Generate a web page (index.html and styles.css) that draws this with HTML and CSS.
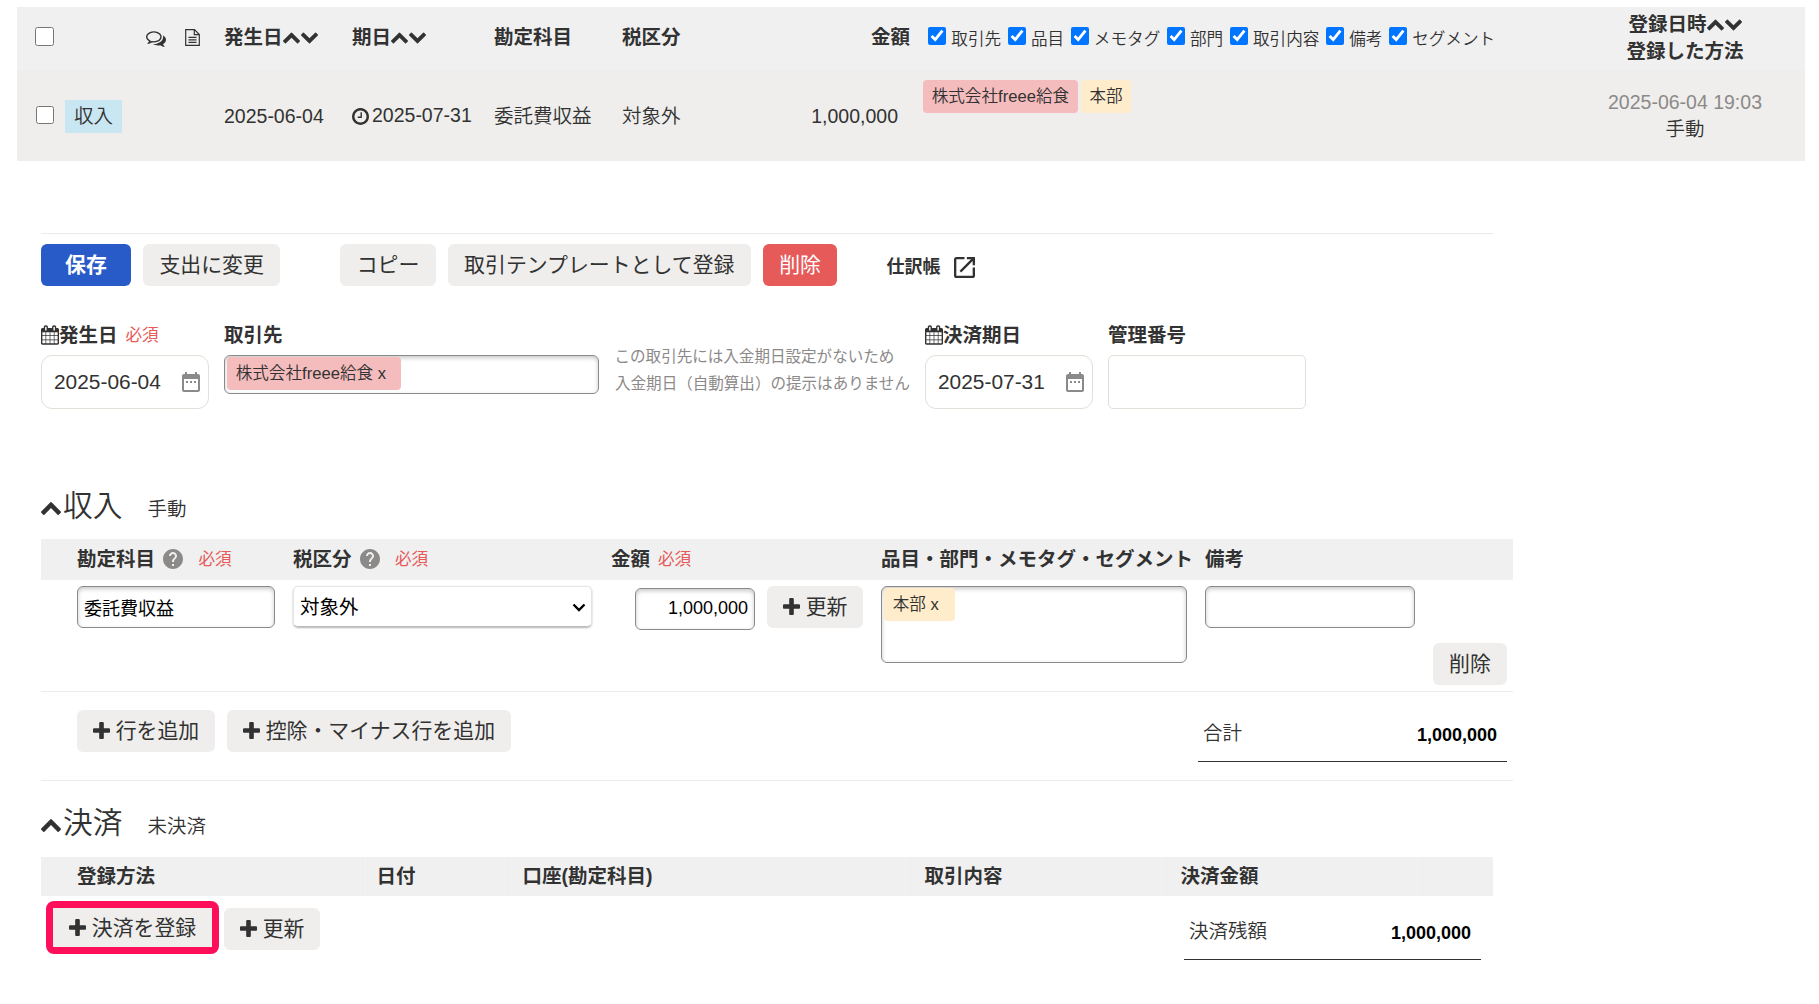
FILE: index.html
```html
<!DOCTYPE html>
<html lang="ja">
<head>
<meta charset="utf-8">
<title>取引の詳細</title>
<link rel="stylesheet" href="styles.css">
</head>
<body>
<svg class="sprite" aria-hidden="true">
  <symbol id="up" viewBox="90 480 1612 1035"><path d="M1683 1331l-166 165q-19 19-45 19t-45-19l-531-531-531 531q-19 19-45 19t-45-19l-166-165q-19-19-19-45.5t19-45.5l742-741q19-19 45-19t45 19l742 741q19 19 19 45.5t-19 45.5z"/></symbol>
  <symbol id="down" viewBox="90 533 1612 1035"><path d="M1683 808l-742 741q-19 19-45 19t-45-19l-742-741q-19-19-19-45.5t19-45.5l166-165q19-19 45-19t45 19l531 531 531-531q19-19 45-19t45 19l166 165q19 19 19 45.5t-19 45.5z"/></symbol>
  <symbol id="plus" viewBox="192 128 1408 1408"><path d="M1600 736v192q0 40-28 68t-68 28h-416v416q0 40-28 68t-68 28h-192q-40 0-68-28t-28-68v-416h-416q-40 0-68-28t-28-68v-192q0-40 28-68t68-28h416v-416q0-40 28-68t68-28h192q40 0 68 28t28 68v416h416q40 0 68 28t28 68z"/></symbol>
  <symbol id="comments" viewBox="0 256 1792 1408"><path d="M704 384q-153 0-286 52t-211.500 141-78.500 191q0 82 53 158t149 132l97 56-35 84q34-20 62-39l44-31 53 10q78 14 153 14 153 0 286-52t211.500-141 78.500-191-78.500-191-211.500-141-286-52zm0-128q191 0 353.500 68.500t256.500 186.500 94 257-94 257-256.500 186.500-353.500 68.500q-86 0-176-16-124 88-278 128-36 9-86 16h-3q-11 0-20.500-8t-11.500-21q-1-3-1-6.500t.5-6.500 2-6l2.500-5 3.500-5.500 4-5 4.500-5 4-4.500q5-6 23-25t26-29.500 22.500-29 25-38.500 20.500-44q-124-72-195-177t-71-224q0-139 94-257t256.500-186.500 353.500-68.500zm822 1169q10 24 20.500 44t25 38.500 22.500 29 26 29.500 23 25q1 1 4 4.500t4.500 5 4 5 3.500 5.500l2.500 5 2 6 .5 6.500-1 6.500q-3 14-13 22t-22 7q-50-7-86-16-154-40-278-128-90 16-176 16-271 0-472-132 58 4 88 4 161 0 309-45t264-129q125-92 192-212t67-254q0-77-23-152 129 71 204 178t75 230q0 120-71 224.500t-195 176.500z"/></symbol>
  <symbol id="file" viewBox="0 0 15 17"><path d="M1.200.7h8.300l4.800 4.800v10.800H.7V.7zM9.300.7v5h5M3.500 8.300h8M3.500 10.800h8M3.500 13.300h8" fill="none" stroke="currentColor" stroke-width="1.200"/></symbol>
  <symbol id="clock" viewBox="128 128 1536 1536"><path d="M1024 544v448q0 14-9 23t-23 9h-320q-14 0-23-9t-9-23v-64q0-14 9-23t23-9h224v-352q0-14 9-23t23-9h64q14 0 23 9t9 23zm416 352q0-148-73-273t-198-198-273-73-273 73-198 198-73 273 73 273 198 198 273 73 273-73 198-198 73-273zm224 0q0 209-103 385.500t-279.500 279.500-385.500 103-385.500-103-279.500-279.500-103-385.500 103-385.500 279.500-279.500 385.500-103 385.500 103 279.500 279.500 103 385.500z"/></symbol>
  <symbol id="calendar" viewBox="64 0 1664 1792"><path d="M192 1664h288v-288h-288v288zm352 0h320v-288h-320v288zm-352-352h288v-320h-288v320zm352 0h320v-320h-320v320zm-352-384h288v-288h-288v288zm736 736h320v-288h-320v288zm-384-736h320v-288h-320v288zm768 736h288v-288h-288v288zm-384-352h320v-320h-320v320zm-352-864v-288q0-13-9.500-22.500t-22.500-9.500h-64q-13 0-22.500 9.500t-9.500 22.500v288q0 13 9.500 22.500t22.500 9.500h64q13 0 22.500-9.500t9.500-22.500zm736 864h288v-320h-288v320zm-384-384h320v-288h-320v288zm384 0h288v-288h-288v288zm32-480v-288q0-13-9.500-22.500t-22.500-9.500h-64q-13 0-22.500 9.500t-9.500 22.500v288q0 13 9.500 22.500t22.500 9.500h64q13 0 22.500-9.500t9.500-22.500zm384-64v1280q0 52-38 90t-90 38h-1408q-52 0-90-38t-38-90v-1280q0-52 38-90t90-38h128v-96q0-66 47-113t113-47h64q66 0 113 47t47 113v96h384v-96q0-66 47-113t113-47h64q66 0 113 47t47 113v96h128q52 0 90 38t38 90z"/></symbol>
  <symbol id="date" viewBox="3 2 18 20"><path d="M9 11H7v2h2v-2zm4 0h-2v2h2v-2zm4 0h-2v2h2v-2zm2-7h-1V2h-2v2H8V2H6v2H5c-1.110 0-1.990.9-1.990 2L3 20c0 1.100.89 2 2 2h14c1.100 0 2-.9 2-2V6c0-1.100-.9-2-2-2zm0 16H5V9h14v11z"/></symbol>
  <symbol id="help" viewBox="2 2 20 20"><path d="M12 2C6.480 2 2 6.480 2 12s4.480 10 10 10 10-4.480 10-10S17.520 2 12 2zm1 17h-2v-2h2v2zm2.070-7.750l-.9.920C13.450 12.900 13 13.500 13 15h-2v-.5c0-1.100.45-2.100 1.170-2.830l1.240-1.260c.37-.36.59-.86.59-1.410 0-1.100-.9-2-2-2s-2 .9-2 2H8c0-2.210 1.790-4 4-4s4 1.790 4 4c0 .88-.36 1.680-.93 2.250z"/></symbol>
  <symbol id="open" viewBox="3 3 18 18"><path d="M19 19H5V5h7V3H5c-1.110 0-2 .9-2 2v14c0 1.100.89 2 2 2h14c1.100 0 2-.9 2-2v-7h-2v7zM14 3v2h3.590l-9.830 9.830 1.410 1.410L19 6.410V10h2V3h-7z"/></symbol>
</svg>

<section class="deals">
  <div class="deal-row deal-head">
    <input type="checkbox" class="check check-all">
    <span></span>
    <svg class="i-comments"><use href="#comments"/></svg>
    <svg class="i-file"><use href="#file"/></svg>
    <span class="sortable">発生日<svg class="sort"><use href="#up"/></svg><svg class="sort"><use href="#down"/></svg></span>
    <span class="sortable">期日<svg class="sort"><use href="#up"/></svg><svg class="sort"><use href="#down"/></svg></span>
    <span>勘定科目</span>
    <span>税区分</span>
    <span class="right">金額</span>
    <div class="filters">
      <label><input type="checkbox" class="check" checked>取引先</label>
      <label><input type="checkbox" class="check" checked>品目</label>
      <label><input type="checkbox" class="check" checked>メモタグ</label>
      <label><input type="checkbox" class="check" checked>部門</label>
      <label><input type="checkbox" class="check" checked>取引内容</label>
      <label><input type="checkbox" class="check" checked>備考</label>
      <label><input type="checkbox" class="check" checked>セグメント</label>
    </div>
    <div class="stamp"><span class="sortable">登録日時<svg class="sort"><use href="#up"/></svg><svg class="sort"><use href="#down"/></svg></span><span>登録した方法</span></div>
  </div>
  <div class="deal-row deal-body">
    <input type="checkbox" class="check check-row">
    <span class="kind">収入</span>
    <span></span><span></span>
    <span>2025-06-04</span>
    <span class="due"><svg class="i-clock"><use href="#clock"/></svg>2025-07-31</span>
    <span>委託費収益</span>
    <span>対象外</span>
    <span class="right sum">1,000,000</span>
    <div class="tags"><span class="tag pink">株式会社freee給食</span><span class="tag yellow">本部</span></div>
    <div class="stamp"><span class="muted">2025-06-04 19:03</span><span>手動</span></div>
  </div>
</section>

<main class="detail">
  <div class="toolbar">
    <button class="btn primary">保存</button>
    <button class="btn">支出に変更</button>
    <button class="btn copy">コピー</button>
    <button class="btn">取引テンプレートとして登録</button>
    <button class="btn danger">削除</button>
    <a class="journal">仕訳帳<svg class="i-open"><use href="#open"/></svg></a>
  </div>

  <div class="basics">
    <div class="field">
      <div class="label"><svg class="i-cal"><use href="#calendar"/></svg>発生日<em class="req">必須</em></div>
      <div class="datebox">2025-06-04<svg class="i-date"><use href="#date"/></svg></div>
    </div>
    <div class="field">
      <div class="label">取引先</div>
      <div class="box partner"><span class="tag pink">株式会社freee給食 x</span></div>
    </div>
    <p class="hint">この取引先には入金期日設定がないため<br>入金期日（自動算出）の提示はありません</p>
    <div class="field">
      <div class="label"><svg class="i-cal"><use href="#calendar"/></svg>決済期日</div>
      <div class="datebox">2025-07-31<svg class="i-date"><use href="#date"/></svg></div>
    </div>
    <div class="field">
      <div class="label">管理番号</div>
      <div class="datebox number"></div>
    </div>
  </div>

  <h2 class="title"><svg class="i-fold"><use href="#up"/></svg>収入<small>手動</small></h2>
  <div class="lines">
    <div class="line-grid line-head">
      <div class="label">勘定科目<svg class="i-help"><use href="#help"/></svg><em class="req far">必須</em></div>
      <div class="label">税区分<svg class="i-help"><use href="#help"/></svg><em class="req far">必須</em></div>
      <div class="label">金額<em class="req">必須</em></div>
      <div class="label">品目・部門・メモタグ・セグメント</div>
      <div class="label">備考</div>
    </div>
    <div class="line-grid line-body">
      <div class="box account">委託費収益</div>
      <div class="select">対象外<svg class="i-caret" viewBox="0 0 14 9"><path d="M1.500 1.500 7 7l5.500-5.500"/></svg></div>
      <div class="amount-cell"><div class="box amount">1,000,000</div><button class="btn icon"><svg class="i-plus"><use href="#plus"/></svg>更新</button></div>
      <div class="box tagbox"><span class="tag yellow">本部 x</span></div>
      <div class="box memo"></div>
      <button class="btn remove">削除</button>
    </div>
    <div class="line-foot">
      <button class="btn icon"><svg class="i-plus"><use href="#plus"/></svg>行を追加</button>
      <button class="btn icon"><svg class="i-plus"><use href="#plus"/></svg>控除・マイナス行を追加</button>
      <div class="total"><span>合計</span><b>1,000,000</b></div>
    </div>
  </div>

  <h2 class="title second"><svg class="i-fold"><use href="#up"/></svg>決済<small>未決済</small></h2>
  <div class="pay-head">
    <span>登録方法</span><span>日付</span><span>口座(勘定科目)</span><span>取引内容</span><span>決済金額</span><span></span>
  </div>
  <div class="pay-body">
    <div class="highlight"><button class="btn icon"><svg class="i-plus"><use href="#plus"/></svg>決済を登録</button></div>
    <button class="btn icon"><svg class="i-plus"><use href="#plus"/></svg>更新</button>
    <div class="total"><span>決済残額</span><b>1,000,000</b></div>
  </div>
</main>
</body>
</html>
```
FILE: styles.css
```css
* { box-sizing: border-box; }
body {
  margin: 0;
  padding: 7px 0 0;
  background: #fff;
  color: #323232;
  font: 19.5px/27px "Liberation Sans", "Noto Sans CJK JP", sans-serif;
  font-weight: 350;
  white-space: nowrap;
}
svg { fill: currentColor; flex: none; display: block; }
.sprite { position: absolute; width: 0; height: 0; }
.muted { color: #8c8989; }

.deals { width: 1788px; margin-left: 17px; }
.deal-row {
  display: grid;
  grid-template-columns: 30px 81px 39px 39px 128px 142px 128px 128px 160px 655px 240px;
  padding-left: 18px;
  align-items: center;
}
.deal-head { height: 63px; background: #f0f0f0; font-weight: 700; padding-bottom: 3px; }
.deal-body { height: 91px; background: #efeeec; padding-top: 1px; }
.check { width: 18px; height: 18px; margin: 0; }
.check-all { width: 19px; height: 19px; margin-top: -1px; }
.check-row { margin: -3px 0 0 1px; }
.i-comments { width: 20px; height: 16px; margin-top: 3px; }
.i-file { width: 15px; height: 17px; }
.sortable { display: flex; align-items: center; }
.sort { width: 17px; height: 12px; margin: 1px 0 0 1px; }
.sort:first-of-type { margin-left: 0; }
.right { text-align: right; }
.sum { padding-right: 12px; }
.filters { display: flex; gap: 6.5px; padding-left: 18px; font-size: 16.6px; font-weight: 350; }
.filters label { display: flex; align-items: center; gap: 5.3px; padding-top: 5px; }
.filters .check { margin-top: -7px; }
.stamp { display: flex; flex-direction: column; align-items: center; }
.deal-head .stamp { padding-top: 2px; }
.kind { width: 57px; height: 33px; line-height: 32px; text-align: center; background: #c9e6f3; }
.due { display: flex; align-items: center; gap: 3px; margin-top: -1px; }
.i-clock { width: 17px; height: 17px; margin-top: 2px; }
.tags { display: flex; gap: 3px; padding-left: 13px; align-self: start; margin-top: 9px; }
.tag { display: block; height: 33px; line-height: 33px; padding: 0 8.700px; border-radius: 4px; font-size: 16.6px; color: #323232; }
.pink { background: #f4bcbd; }
.yellow { background: #ffecca; }

.detail { margin-left: 41px; }
.toolbar { display: flex; align-items: center; gap: 12px; width: 1452px; margin-top: 72px; padding-top: 10px; border-top: 1px solid #ebebeb; }
.btn {
  display: flex; align-items: center; justify-content: center;
  height: 42px; padding: 0 16.400px 1px; border: 0; border-radius: 6px;
  background: #efeeec; color: #323232;
  font: 400 20.900px/40px "Liberation Sans", "Noto Sans CJK JP", sans-serif;
  white-space: nowrap;
}
.primary { width: 90px; background: #285ac8; color: #fff; font-weight: 700; }
.danger { background: #e65a5a; color: #fff; }
.copy { margin-left: 48px; }
.journal { display: flex; align-items: center; gap: 14px; margin-left: 37px; padding-top: 4px; font-size: 18px; font-weight: 700; }
.i-open { width: 21px; height: 21px; }

.basics { display: flex; margin-top: 36px; height: 87px; }
.label { display: flex; align-items: center; height: 27px; font-weight: 700; }
.i-cal { width: 18px; height: 20px; margin-top: -1px; }
.req { margin-left: 8px; font-size: 16.600px; font-style: normal; font-weight: 400; color: #e65a5a; }
.req.far { margin-left: 15.500px; }
.datebox {
  display: flex; align-items: center; justify-content: space-between;
  width: 168px; height: 54px; margin: 6px 15px 0 0; padding: 0 8px 1px 12px;
  border: 1px solid #e1dfd8; border-radius: 11px; font-size: 20.900px;
}
.number { width: 198px; border-radius: 5px; }
.i-date { width: 18px; height: 20px; color: #8c8989; }
.box { border: 1px solid #8c8989; border-radius: 6px; background: #fff; box-shadow: inset 0 2px 4px rgba(0,0,0,.22); }
.partner { display: flex; width: 375px; height: 39px; margin: 6px 16px 0 0; padding: 1px 2px; }
.partner .tag { width: 174px; }
.hint { width: 310px; margin: 21px 0 0; font-size: 15.550px; font-weight: 400; color: #8c8989; text-indent: -.5px; }

.title { display: flex; align-items: center; height: 40px; margin: 77px 0 0; font-size: 29.700px; line-height: 40px; font-weight: 350; }
.i-fold { width: 20px; height: 13px; margin: 4px 2px 0 0; }
.title small { margin: 6px 0 0 25px; font-size: 19.500px; }

.lines { width: 1472px; margin-top: 13px; border-bottom: 1px solid #ebebeb; }
.line-grid { display: grid; grid-template-columns: 216px 318px 270px 324px 228px 74px; padding-left: 36px; }
.line-head { height: 41px; padding-top: 7px; background: #f0f0f0; }
.line-head .i-help { margin-top: -2px; }
.i-help { width: 20px; height: 20px; margin-left: 8px; color: #8c8989; }
.line-body { height: 112px; padding-top: 6px; border-bottom: 1px solid #ebebeb; align-items: start; }
.account { width: 198px; height: 42px; padding: 0 6px; font-size: 18px; line-height: 44px; font-weight: 400; color: #000; }
.select {
  display: flex; align-items: center; justify-content: space-between;
  width: 299px; height: 41px; padding: 1px 5px 0 6px; border: 1px solid #e4e4e4; border-bottom-color: #bbb;
  border-radius: 5px; box-shadow: 0 1px 2px rgba(0,0,0,.3); font-weight: 400; color: #000;
}
.i-caret { width: 14px; height: 9px; fill: none; stroke: #000; stroke-width: 2.400; }
.amount-cell { display: flex; gap: 12px; padding-left: 24px; }
.amount { width: 120px; height: 42px; margin-top: 2px; padding: 0 6px; text-align: right; font-size: 18px; line-height: 39px; color: #000; }
.btn.icon { gap: 6px; padding: 0 15.700px 1px; }
.i-plus { width: 17px; height: 17px; margin-top: -1px; }
.tagbox { display: flex; width: 306px; height: 77px; padding: 1px 2px; }
.tagbox .tag { width: 71px; }
.memo { width: 210px; height: 42px; }
.remove { margin-top: 57px; width: 74px; }
.line-foot { display: flex; gap: 12px; height: 88px; padding: 18px 6px 0 36px; }
.total {
  display: flex; align-items: center; justify-content: space-between;
  width: 309px; height: 52px; margin-left: auto; padding: 0 10px 4px 5px; border-bottom: 1px solid #323232;
}
.total b { padding-top: 3px; font-size: 18px; font-weight: 700; color: #000; }

.second { margin-top: 22px; }
.pay-head { display: grid; grid-template-columns: 322px 146px 402px 256px 256px 70px; width: 1452px; height: 39px; margin-top: 14px; background: #f0f0f0; font-weight: 700; line-height: 38px; }
.pay-head span { padding-left: 13.500px; border-right: 1px solid #ededed; }
.pay-head span:first-child { padding-left: 36px; }
.pay-head span:last-child { border: 0; }
.pay-body { display: flex; width: 1440px; padding: 12px 0 0 5px; }
.highlight { width: 173px; height: 53px; margin: -7px 5px 0 0; border: 7px solid #ff0f5a; border-radius: 8px; }
.highlight .btn { width: 159px; height: 39px; padding-bottom: 0; border-radius: 0; }
.pay-body .total { width: 297px; }
```
